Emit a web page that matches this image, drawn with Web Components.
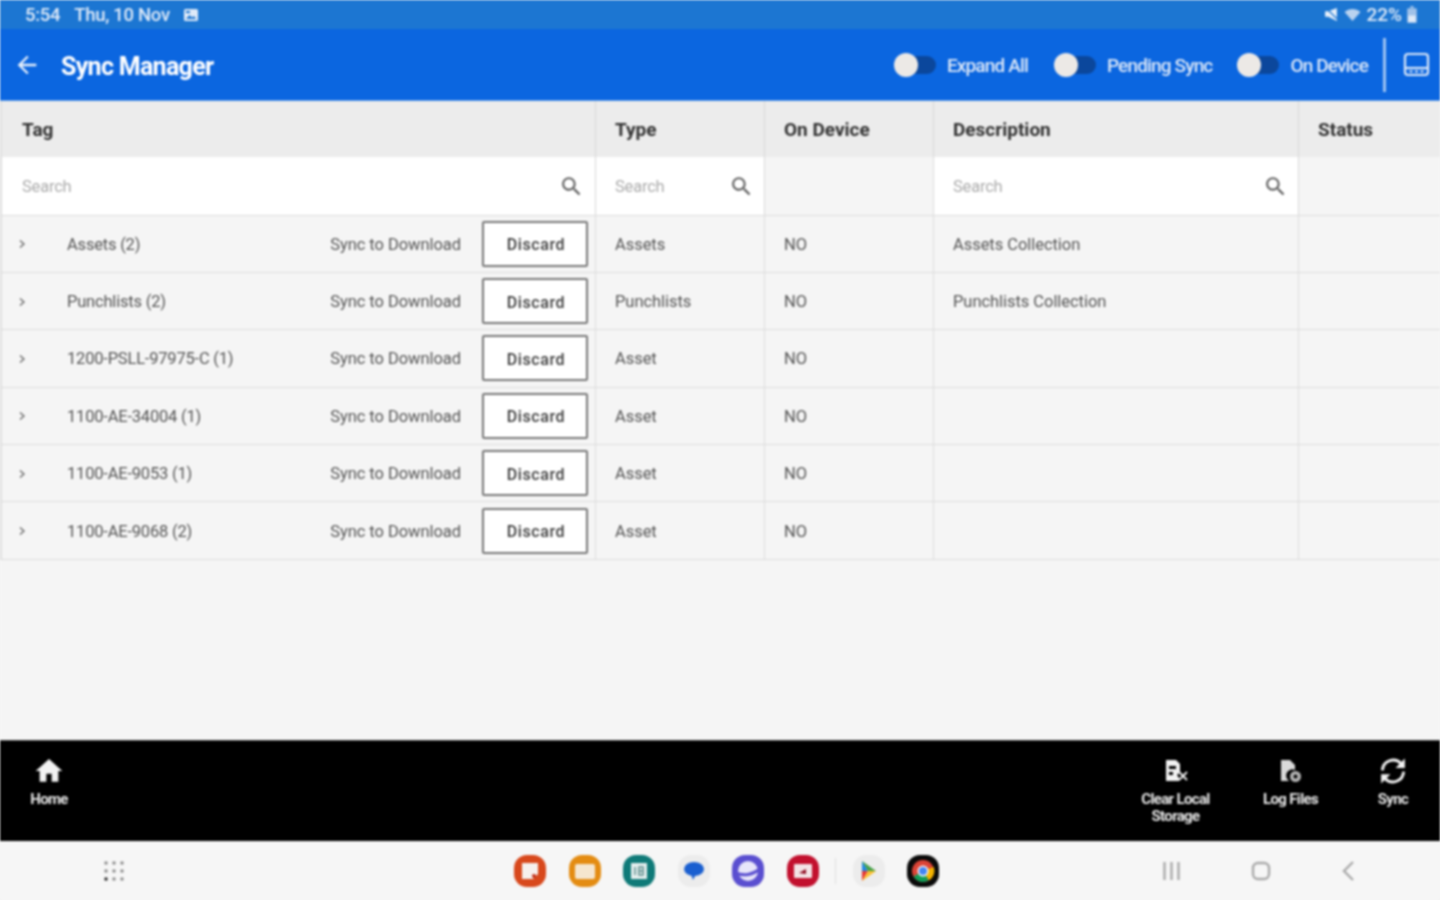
<!DOCTYPE html>
<html lang="en">
<head>
<meta charset="utf-8">
<title>Sync Manager</title>
<style>
  html, body { margin: 0; height: 100%; }
  body {
    width: 1440px;
    height: 900px;
    overflow: hidden;
    display: flex;
    flex-direction: column;
    font-family: Roboto, "Liberation Sans", sans-serif;
    background: #f5f5f5;
    filter: blur(0.8px);
  }
  sync-table { flex: 1; }
</style>
</head>
<body>
<status-bar></status-bar>
<app-bar></app-bar>
<sync-table></sync-table>
<action-bar></action-bar>
<nav-bar></nav-bar>

<script>
const ICONS = {
  back: '<path d="M20 11H7.83l5.59-5.59L12 4l-8 8 8 8 1.41-1.41L7.83 13H20v-2z"/>',
  search: '<path d="M15.5 14h-.79l-.28-.27C15.41 12.59 16 11.11 16 9.5 16 5.91 13.09 3 9.5 3S3 5.91 3 9.5 5.91 16 9.5 16c1.61 0 3.09-.59 4.23-1.57l.27.28v.79l5 4.99L20.49 19l-4.99-5zm-6 0C7.01 14 5 11.99 5 9.5S7.01 5 9.5 5 14 7.01 14 9.5 11.99 14 9.5 14z"/>',
  home: '<path d="M10 20v-6h4v6h5v-8h3L12 3 2 12h3v8z"/>',
  sync: '<path d="M3.500 11.500A8.700 8.700 0 0 1 18.500 6M20.500 12.500A8.700 8.700 0 0 1 5.500 18" fill="none" stroke="currentColor" stroke-width="2.300"/><path d="M21.500 2v7.500h-7.500zM2.500 22v-7.500h7.500z"/>',
  clear: '<path fill-rule="evenodd" d="M2 1h10l4 4v8l-3 3 2 3v3H2zM5 7v3h7V7zM5 13v3h4v-3z"/><path d="M15 13l8 8M23 13l-8 8" stroke="currentColor" stroke-width="1.800" fill="none"/>',
  log: '<path d="M2 1h9l5 5v5a6 6 0 0 0-5.500 11H2z" opacity=".9"/><path fill-rule="evenodd" d="M16.500 12a5.500 5.500 0 1 0 0 11 5.500 5.500 0 0 0 0-11zm0 3.500a2 2 0 1 1 0 4 2 2 0 0 1 0-4z" opacity=".75"/>'
};

function icon(name, size, color) {
  return `<svg width="${size}" height="${size}" viewBox="0 0 24 24" fill="currentColor" style="color:${color}">${ICONS[name]}</svg>`;
}

class StatusBar extends HTMLElement {
  constructor() {
    super();
    this.attachShadow({ mode: "open" });
  }

  connectedCallback() {
    this.shadowRoot.innerHTML = `
      <style>
        :host {
          display: flex;
          align-items: center;
          justify-content: space-between;
          height: 29px;
          padding: 0 23px 0 25px;
          background: #1c76d2;
          color: #dfeaf8;
          font-size: 18.500px;
          font-weight: 500;
          letter-spacing: -0.3px;
        }
        .side { display: flex; align-items: center; }
        .date { margin-left: 14px; }
        .pic { margin-left: 13px; }
        .right { gap: 5px; font-size: 19px; letter-spacing: 0; }
      </style>
      <div class="side">
        <span>5:54</span><span class="date">Thu, 10 Nov</span>
        <svg class="pic" width="16" height="16" viewBox="0 0 16 16">
          <rect x="1" y="2" width="14" height="12" rx="1.500" fill="#dfeaf8"/>
          <path d="M3 12l3.500-4 2.500 2.500 2-1.500 2 3z" fill="#1c76d2"/>
          <rect x="3" y="4" width="4" height="2" fill="#1c76d2"/>
        </svg>
      </div>
      <div class="side right">
        <svg width="15" height="15" viewBox="0 0 14 14" fill="#e8f0fa"><path d="M1 4h3l8-3v12L4 9H1z"/><path d="M4 3l8 8" stroke="#1c76d2" stroke-width="1.200"/></svg>
        <svg width="17" height="14" viewBox="0 0 16 14" fill="#b9d2ef"><path d="M8 13L0 4c4.500-4 11.500-4 16 0z"/></svg>
        <span>22%</span>
        <svg width="10" height="17" viewBox="0 0 9 16"><rect x="3" y="0" width="3" height="2" fill="#9fc1e8"/><rect x="0" y="2" width="9" height="14" rx="1" fill="#9fc1e8"/><rect x="1" y="9" width="7" height="6" fill="#dfeaf8"/></svg>
      </div>
    `;
  }
}

class ToggleSwitch extends HTMLElement {
  constructor() {
    super();
    this.attachShadow({ mode: "open" });
  }

  connectedCallback() {
    this.shadowRoot.innerHTML = `
      <style>
        :host {
          display: flex;
          align-items: center;
          gap: 11px;
          color: #dbe7f8;
          font-size: 19px;
          font-weight: 500;
          letter-spacing: -0.85px;
        }
        .track {
          position: relative;
          width: 40px;
          height: 18px;
          border-radius: 9px;
          background: #0b479c;
        }
        .thumb {
          position: absolute;
          left: -2px;
          top: -3px;
          width: 24px;
          height: 24px;
          border-radius: 50%;
          background: #ece9e6;
        }
        .label { padding-top: 1px; }
      </style>
      <div class="track"><div class="thumb"></div></div>
      <div class="label"><slot></slot></div>
    `;
  }
}

class AppBar extends HTMLElement {
  constructor() {
    super();
    this.attachShadow({ mode: "open" });
  }

  connectedCallback() {
    this.shadowRoot.innerHTML = `
      <style>
        :host {
          display: flex;
          align-items: center;
          height: 71px;
          padding-left: 13px;
          background: #0b66e0;
          border-bottom: 1px solid #5d9be8;
          color: #fff;
        }
        h1 {
          margin: 3px 0 0 20px;
          flex: 1;
          font-size: 25px;
          font-weight: 700;
          letter-spacing: -0.7px;
        }
        .toggles { display: flex; gap: 27px; margin-right: 15px; }
        .toggles :first-child { margin-right: 1px; }
        .divider { width: 3px; height: 54px; background: #9cc2f2; }
        .tablet { margin: 0 10px 0 17px; }
        svg { display: block; }
      </style>
      ${icon("back", 28, "#e6effb")}
      <h1>Sync Manager</h1>
      <div class="toggles">
        <toggle-switch>Expand All</toggle-switch>
        <toggle-switch>Pending Sync</toggle-switch>
        <toggle-switch>On Device</toggle-switch>
      </div>
      <div class="divider"></div>
      <svg class="tablet" width="27" height="27" viewBox="0 0 27 27" fill="none" stroke="#dbe7f8" stroke-width="2.200">
        <rect x="2" y="3" width="23" height="21" rx="3"/>
        <path d="M2 17h23"/>
        <path d="M6.500 20.500h3M12 20.500h3M17.500 20.500h3"/>
      </svg>
    `;
  }
}

const COLS = "596px 169px 169px 365px 1fr";

class SearchCell extends HTMLElement {
  constructor() {
    super();
    this.attachShadow({ mode: "open" });
  }

  connectedCallback() {
    this.shadowRoot.innerHTML = `
      <style>
        :host {
          display: flex;
          align-items: center;
          justify-content: space-between;
          padding: 1px 10px 0 19px;
          background: #fff;
          color: #ababab;
          font-size: 16.500px;
          letter-spacing: -0.2px;
          border-right: 1px solid #d8d8d8;
          box-sizing: border-box;
        }
        :host([first]) { padding-left: 20px; padding-right: 11px; border-left: 2px solid #dfdfdf; }
        svg { display: block; }
      </style>
      <span>Search</span>
      ${icon("search", 25, "#5f5f5f")}
    `;
  }
}

class SyncRow extends HTMLElement {
  constructor() {
    super();
    this.attachShadow({ mode: "open" });
  }

  connectedCallback() {
    const tag = this.getAttribute("tag");
    const type = this.getAttribute("type");
    const desc = this.getAttribute("desc") || "";
    this.shadowRoot.innerHTML = `
      <style>
        :host {
          display: grid;
          grid-template-columns: ${COLS};
          height: 57.400px;
          box-sizing: border-box;
          border-bottom: 1px solid #dcdcdc;
          color: #555;
          font-size: 16.500px;
          letter-spacing: -0.05px;
        }
        .cell {
          display: flex;
          align-items: center;
          padding: 1px 0 0 19px;
          border-right: 1px solid #dcdcdc;
          white-space: nowrap;
          box-sizing: border-box;
          min-width: 0;
        }
        .cell:last-child { border-right: 0; }
        .tag { padding-left: 16px; padding-right: 7px; border-left: 2px solid #dfdfdf; }
        .tag svg { margin-right: 40px; }
        .name { flex: 1; letter-spacing: -0.2px; }
        .state { margin-right: 21px; }
        button {
          width: 106px;
          height: 46px;
          margin-top: -1px;
          padding: 2px 0 0 2px;
          border: 2px solid #777;
          border-radius: 2px;
          background: #fff;
          color: #3c3c3c;
          font: inherit;
          font-size: 16px;
          font-weight: 500;
          letter-spacing: 0.6px;
        }
      </style>
      <div class="cell tag">
        <svg width="9" height="10" viewBox="0 0 9 10" fill="none" stroke="#666" stroke-width="1.300"><path d="M2 1.500L6 5 2 8.500"/></svg>
        <span class="name">${tag}</span>
        <span class="state">Sync to Download</span>
        <button>Discard</button>
      </div>
      <div class="cell">${type}</div>
      <div class="cell">NO</div>
      <div class="cell">${desc}</div>
      <div class="cell"></div>
    `;
  }
}

class SyncTable extends HTMLElement {
  constructor() {
    super();
    this.attachShadow({ mode: "open" });
  }

  connectedCallback() {
    this.shadowRoot.innerHTML = `
      <style>
        :host { display: block; background: #f5f5f5; }
        .head, .search { display: grid; grid-template-columns: ${COLS}; }
        .head {
          height: 56px;
          background: #ececec;
          color: #333;
          font-size: 19px;
          font-weight: 700;
          letter-spacing: 0;
        }
        .head div {
          display: flex;
          align-items: center;
          padding-left: 19px;
          border-right: 1px solid #d8d8d8;
          box-sizing: border-box;
        }
        .head div:first-child { padding-left: 20px; border-left: 2px solid #dfdfdf; }
        .head div:last-child { border-right: 0; }
        .search { height: 58.500px; border-bottom: 1px solid #dcdcdc; box-sizing: border-box; }
        .blank { background: #f5f5f5; border-right: 1px solid #dcdcdc; }
        .blank:last-child { border-right: 0; }
      </style>
      <div class="head">
        <div>Tag</div><div>Type</div><div>On Device</div><div>Description</div><div>Status</div>
      </div>
      <div class="search">
        <search-cell first></search-cell>
        <search-cell></search-cell>
        <div class="blank"></div>
        <search-cell></search-cell>
        <div class="blank"></div>
      </div>
      <sync-row tag="Assets (2)" type="Assets" desc="Assets Collection"></sync-row>
      <sync-row tag="Punchlists (2)" type="Punchlists" desc="Punchlists Collection"></sync-row>
      <sync-row tag="1200-PSLL-97975-C (1)" type="Asset"></sync-row>
      <sync-row tag="1100-AE-34004 (1)" type="Asset"></sync-row>
      <sync-row tag="1100-AE-9053 (1)" type="Asset"></sync-row>
      <sync-row tag="1100-AE-9068 (2)" type="Asset"></sync-row>
    `;
  }
}

class ActionItem extends HTMLElement {
  constructor() {
    super();
    this.attachShadow({ mode: "open" });
  }

  connectedCallback() {
    this.shadowRoot.innerHTML = `
      <style>
        :host {
          display: flex;
          flex-direction: column;
          align-items: center;
          width: 98px;
          color: #e8e8e8;
          font-size: 15px;
          font-weight: 700;
          line-height: 17px;
          letter-spacing: -0.65px;
          text-align: center;
        }
        .box { display: flex; align-items: center; height: 30px; margin-bottom: 5px; }
        svg { display: block; }
      </style>
      <div class="box">${icon(this.getAttribute("icon"), +this.getAttribute("size") || 30, "#f2f2f2")}</div>
      <slot></slot>
    `;
  }
}

class ActionBar extends HTMLElement {
  constructor() {
    super();
    this.attachShadow({ mode: "open" });
  }

  connectedCallback() {
    this.shadowRoot.innerHTML = `
      <style>
        :host {
          display: flex;
          justify-content: space-between;
          box-sizing: border-box;
          height: 101px;
          padding: 15px 0 0 0;
          background: #000;
          border-top: 1px solid #444;
        }
        .group { display: flex; padding-right: 2px; }
        .clear { width: 115px; }
        .log { width: 115px; }
        .sync { width: 90px; }
      </style>
      <action-item class="home" icon="home" size="32">Home</action-item>
      <div class="group">
        <action-item class="clear" icon="clear" size="24">Clear Local<br>Storage</action-item>
        <action-item class="log" icon="log" size="24">Log Files</action-item>
        <action-item class="sync" icon="sync" size="30">Sync</action-item>
      </div>
    `;
  }
}

class NavBar extends HTMLElement {
  constructor() {
    super();
    this.attachShadow({ mode: "open" });
  }

  connectedCallback() {
    this.shadowRoot.innerHTML = `
      <style>
        :host {
          display: grid;
          grid-template-columns: 1fr auto 1fr;
          align-items: center;
          height: 59px;
          background: #f6f6f6;
        }
        .left { padding-left: 103px; }
        .apps { display: flex; align-items: center; gap: 22.500px; margin-left: 13px; }
        .app { display: block; width: 32px; height: 32px; }
        .sep { width: 1px; height: 26px; background: #ddd; margin: 0 -6px; }
        .right { display: flex; align-items: center; justify-content: flex-end; gap: 70px; padding-right: 85px; }
        svg { display: block; }
      </style>
      <div class="left">
        <svg width="22" height="22" viewBox="0 0 22 22" fill="#8a8a8a">
          <circle cx="3" cy="3" r="1.700"/><circle cx="11" cy="3" r="1.700"/><circle cx="19" cy="3" r="1.700"/>
          <circle cx="3" cy="11" r="1.700"/><circle cx="11" cy="11" r="1.700"/><circle cx="19" cy="11" r="1.700"/>
          <circle cx="3" cy="19" r="1.700" fill="#222"/><circle cx="11" cy="19" r="1.700"/><circle cx="19" cy="19" r="1.700"/>
        </svg>
      </div>
      <div class="apps">
        <svg class="app" viewBox="0 0 32 32"><rect width="32" height="32" rx="13" fill="#d8481c"/><path d="M8 8h16v11l-5 5H8z" fill="#f6f0ee"/><circle cx="20" cy="21" r="2" fill="#c02a12"/></svg>
        <svg class="app" viewBox="0 0 32 32"><rect width="32" height="32" rx="13" fill="#e48c12"/><rect x="6" y="9" width="20" height="15" rx="2" fill="#f5e6cf"/></svg>
        <svg class="app" viewBox="0 0 32 32"><rect width="32" height="32" rx="13" fill="#0f7a78"/><rect x="8" y="8" width="16" height="16" fill="#e5efef"/><path d="M12 12v8M16 12h4v8h-4zM16 16h4" stroke="#5d8d8c" stroke-width="1.500" fill="none"/></svg>
        <svg class="app" viewBox="0 0 32 32"><rect width="32" height="32" rx="13" fill="#ececec"/><ellipse cx="16" cy="14" rx="10" ry="7" fill="#1a5fd0"/><path d="M13 19l5 0-3 6z" fill="#1a5fd0"/></svg>
        <svg class="app" viewBox="0 0 32 32"><rect width="32" height="32" rx="13" fill="#5a4fd0"/><circle cx="16" cy="16" r="10" fill="#e8e6fa"/><path d="M3 17c8 5 18 3 26-4" stroke="#5a4fd0" stroke-width="3" fill="none"/></svg>
        <svg class="app" viewBox="0 0 32 32"><rect width="32" height="32" rx="13" fill="#c2102e"/><rect x="7" y="9" width="18" height="14" rx="1" fill="#f3e3e6"/><path d="M12 18l7-4v5z" fill="#8f0a20"/></svg>
        <div class="sep"></div>
        <svg class="app" viewBox="0 0 32 32"><rect width="32" height="32" rx="13" fill="#ececec"/><path d="M9 6v10h6z" fill="#1e88e5"/><path d="M9 26V16h6z" fill="#e53935"/><path d="M9 6l14 10h-8z" fill="#43a047"/><path d="M9 26l14-10h-8z" fill="#fbc02d"/></svg>
        <svg class="app" viewBox="0 0 32 32"><rect width="32" height="32" rx="13" fill="#0a0a0a"/><circle cx="16" cy="16" r="11" fill="#db4437"/><path d="M16 16L6.500 21.500A11 11 0 0 0 22 25.200z" fill="#0f9d58"/><path d="M16 16l6 9.200A11 11 0 0 0 26.800 12z" fill="#f4b400"/><circle cx="16" cy="16" r="5.500" fill="#fff"/><circle cx="16" cy="16" r="4" fill="#4285f4"/></svg>
      </div>
      <div class="right">
        <svg width="19" height="18" viewBox="0 0 19 18" stroke="#aaa" stroke-width="2.400" fill="none"><path d="M2.500 0v18M9.500 0v18M16.500 0v18"/></svg>
        <svg width="20" height="20" viewBox="0 0 20 20" stroke="#aaa" stroke-width="2.400" fill="none"><rect x="2" y="2" width="16" height="16" rx="5"/></svg>
        <svg width="14" height="22" viewBox="0 0 14 22" stroke="#aaa" stroke-width="2.400" fill="none"><path d="M12 2L3 11l9 9"/></svg>
      </div>
    `;
  }
}

customElements.define("status-bar", StatusBar);
customElements.define("toggle-switch", ToggleSwitch);
customElements.define("app-bar", AppBar);
customElements.define("search-cell", SearchCell);
customElements.define("sync-row", SyncRow);
customElements.define("sync-table", SyncTable);
customElements.define("action-item", ActionItem);
customElements.define("action-bar", ActionBar);
customElements.define("nav-bar", NavBar);
</script>
</body>
</html>
